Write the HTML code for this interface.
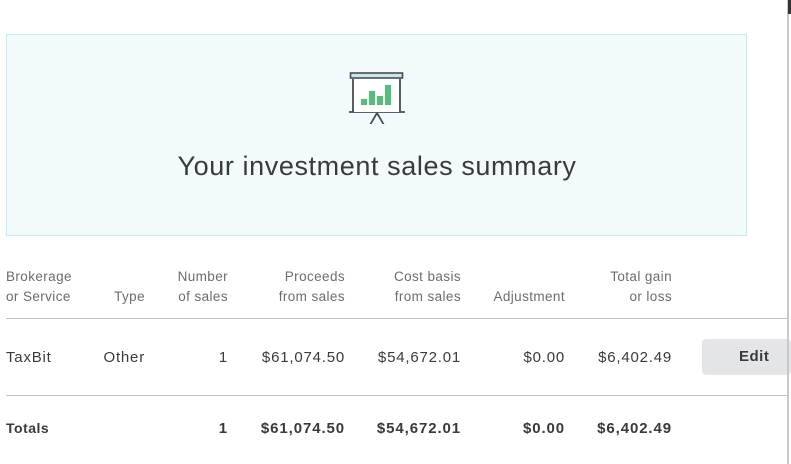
<!DOCTYPE html>
<html><head><style>
body{margin:0;width:791px;height:464px;background:#fff;font-family:"Liberation Sans",sans-serif;position:relative;overflow:hidden}
.box{position:absolute;left:6px;top:34px;width:739px;height:200px;background:#f2fafb;border:1px solid #c4ecf2}
.title{position:absolute;left:0;width:754px;top:151px;text-align:center;font-size:27px;letter-spacing:0.6px;color:#393a3d}
.t{position:absolute;white-space:nowrap;color:#393a3d}
.h{font-size:13.5px;color:#6b6c72;line-height:20px;letter-spacing:0.4px}
.r{text-align:right}
.line{position:absolute;left:6px;width:782px;height:1px;background:#c1c2c6}
.b{font-weight:bold;font-size:15px;letter-spacing:0.9px}
.v{font-size:15px;letter-spacing:0.8px}
.edit{position:absolute;left:702px;top:339px;width:89px;height:36px;background:#e3e5e8;border-radius:4px;font-weight:bold;font-size:15px;letter-spacing:0.5px;color:#393a3d;line-height:36px;text-indent:37px}
.sb{position:absolute;left:787px;top:0;width:2px;height:464px;background:#c8c8c8}
.sbt{position:absolute;left:788px;top:0;width:3px;height:14px;background:#333}
</style></head><body>
<div class="box"></div>
<svg style="position:absolute;left:349px;top:72px" width="56" height="52" viewBox="0 0 56 52">
<rect x="1.5" y="1" width="52" height="5" fill="#c9e4ee" stroke="#4a4d52" stroke-width="1.6"/>
<path d="M4 7V40M51 7V40M0 40H56" stroke="#4a4d52" stroke-width="1.8" fill="none"/>
<rect x="5" y="7" width="45" height="33" fill="#fff"/>
<path d="M28 41L21 53M28 41L35 53" stroke="#4a4d52" stroke-width="1.8"/>
<rect x="12" y="27" width="6" height="6" fill="#53c079"/>
<rect x="20" y="19" width="6" height="14" fill="#53c079"/>
<rect x="28" y="24" width="6" height="9" fill="#53c079"/>
<rect x="36" y="13" width="6" height="20" fill="#53c079"/>
</svg>
<div class="title">Your investment sales summary</div>
<div class="t h" style="left:6px;top:267px">Brokerage<br>or Service</div>
<div class="t h r" style="right:646px;top:287px">Type</div>
<div class="t h r" style="right:563px;top:267px">Number<br>of sales</div>
<div class="t h r" style="right:446px;top:267px">Proceeds<br>from sales</div>
<div class="t h r" style="right:330px;top:267px">Cost basis<br>from sales</div>
<div class="t h r" style="right:226px;top:287px">Adjustment</div>
<div class="t h r" style="right:119px;top:267px">Total gain<br>or loss</div>
<div class="line" style="top:318px"></div>
<div class="t v" style="left:6px;top:349px">TaxBit</div>
<div class="t v r" style="right:646px;top:349px">Other</div>
<div class="t v r" style="right:563px;top:349px">1</div>
<div class="t v r" style="right:446px;top:349px">$61,074.50</div>
<div class="t v r" style="right:330px;top:349px">$54,672.01</div>
<div class="t v r" style="right:226px;top:349px">$0.00</div>
<div class="t v r" style="right:119px;top:349px">$6,402.49</div>
<div class="edit">Edit</div>
<div class="line" style="top:395px"></div>
<div class="t b" style="left:6px;top:420px;font-size:14px;letter-spacing:0.5px">Totals</div>
<div class="t b r" style="right:563px;top:420px">1</div>
<div class="t b r" style="right:446px;top:420px">$61,074.50</div>
<div class="t b r" style="right:330px;top:420px">$54,672.01</div>
<div class="t b r" style="right:226px;top:420px">$0.00</div>
<div class="t b r" style="right:119px;top:420px">$6,402.49</div>
<div class="sb"></div><div class="sbt"></div>
</body></html>
